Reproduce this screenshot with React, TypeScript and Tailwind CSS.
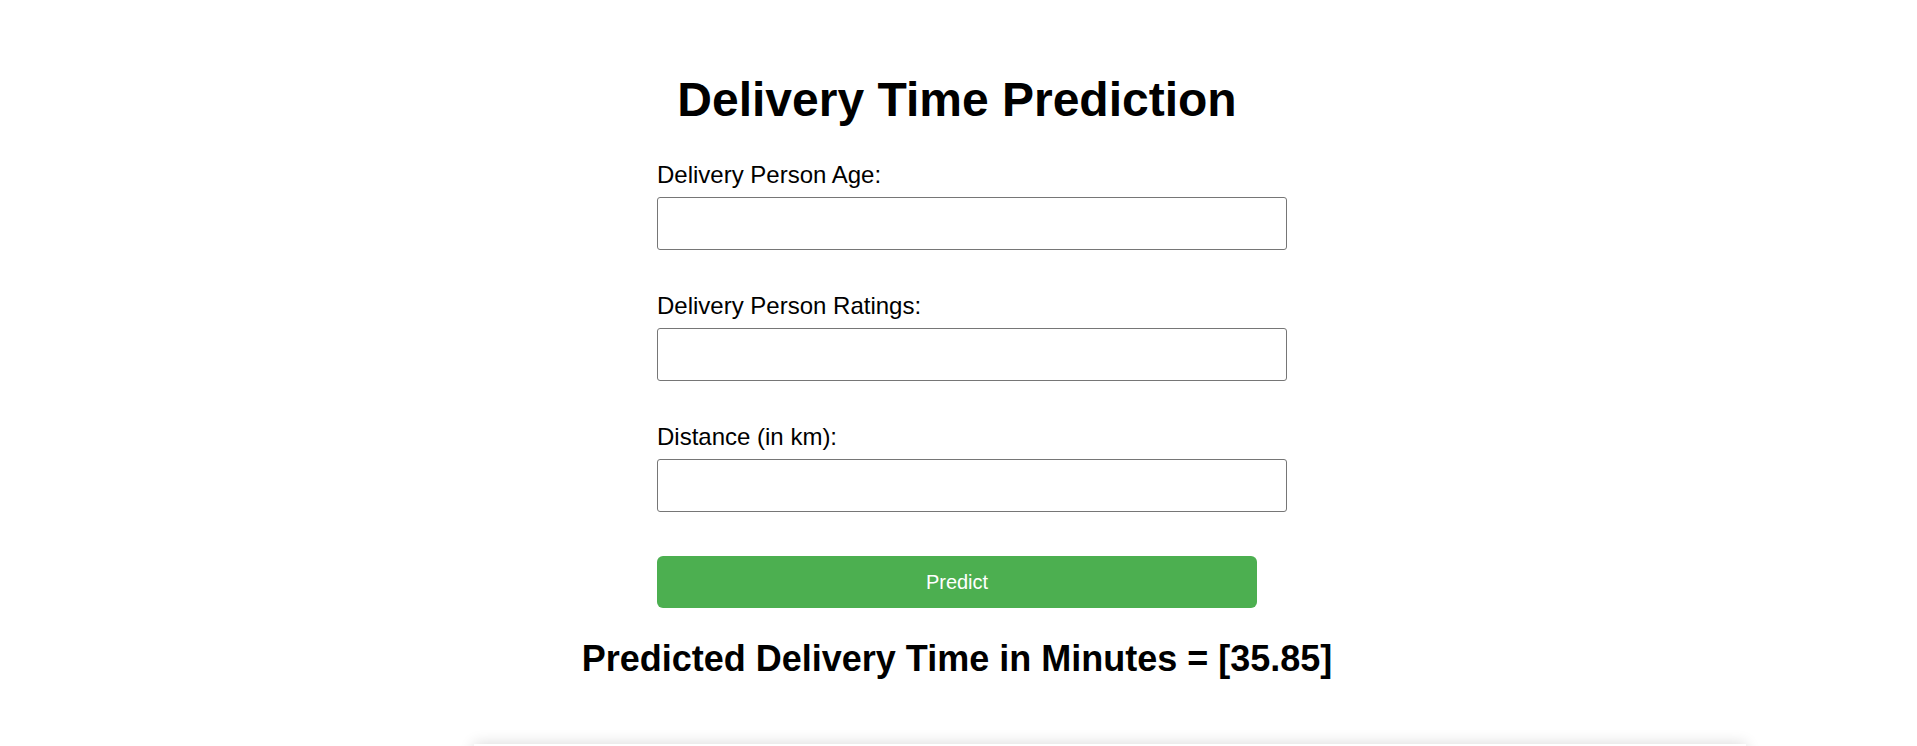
export default function App() {
  return (
    <div className="h-screen bg-white text-black font-['Liberation_Sans',Arial,sans-serif] overflow-hidden">
      <div className="w-[600px] ml-[657px] pt-[72px]">
        <h1 className="text-center text-[48px] leading-[56px] font-bold">Delivery Time Prediction</h1>

        {/* form */}
        <form className="flex flex-col mt-[33px]" onSubmit={(e) => e.preventDefault()}>
          <label className="text-[24px] leading-[28px]">Delivery Person Age:</label>
          <input
            type="text"
            className="mt-2 w-[630px] h-[53px] border border-[#767676] rounded-[3px] px-3 text-[20px] outline-none"
          />

          <label className="mt-[42px] text-[24px] leading-[28px]">Delivery Person Ratings:</label>
          <input
            type="text"
            className="mt-2 w-[630px] h-[53px] border border-[#767676] rounded-[3px] px-3 text-[20px] outline-none"
          />

          <label className="mt-[42px] text-[24px] leading-[28px]">Distance (in km):</label>
          <input
            type="text"
            className="mt-2 w-[630px] h-[53px] border border-[#767676] rounded-[3px] px-3 text-[20px] outline-none"
          />

          <button
            type="submit"
            className="mt-[44px] w-[600px] h-[52px] bg-[#4caf50] text-white text-[20px] rounded-[6px]"
          >
            Predict
          </button>
        </form>

        <h2 className="mt-[30px] -mx-[100px] text-center text-[36px] leading-[42px] font-bold">
          Predicted Delivery Time in Minutes = [35.85]
        </h2>
      </div>

      {/* next card peeking at the bottom */}
      <div className="ml-[474px] mt-[64px] w-[1272px] h-24 bg-white shadow-[0_0_14px_rgba(0,0,0,0.16)]"></div>
    </div>
  );
}
